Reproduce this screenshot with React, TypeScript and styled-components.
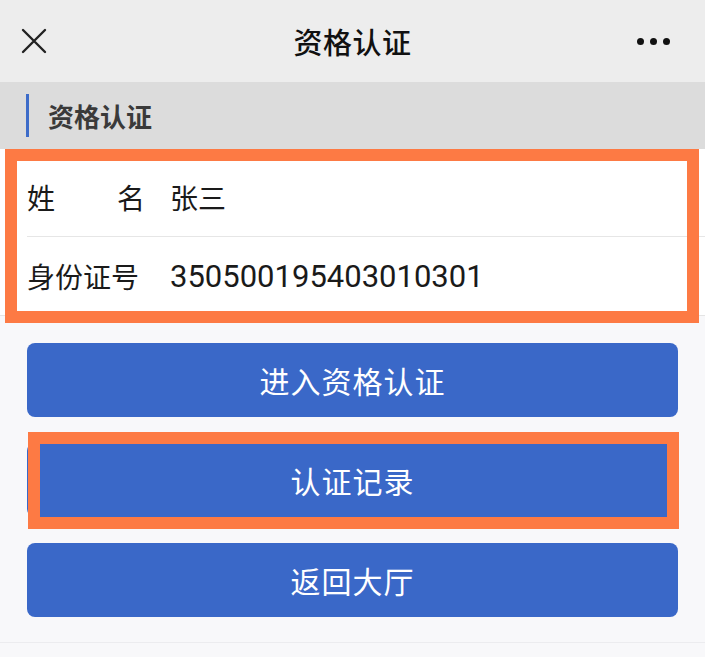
import React from 'react';
import styled, { createGlobalStyle } from 'styled-components';

const ORANGE = '#fd7a44';
const BLUE = '#3a68c8';

const GlobalStyle = createGlobalStyle`
  html, body {
    margin: 0;
    padding: 0;
    background: #f8f8fa;
    font-family: "Noto Sans CJK SC", "Noto Sans", sans-serif;
    color: #1a1a1a;
  }
`;

const Page = styled.div`
  width: 705px;
  min-height: 657px;
  background: #f8f8fa;
`;

const NavBar = styled.div`
  height: 82px;
  background: #ededed;
  display: grid;
  grid-template-columns: 80px 1fr 80px;
  align-items: center;
`;

const NavButton = styled.div<{ $align: 'start' | 'end' }>`
  display: flex;
  justify-content: ${({ $align }) => ($align === 'start' ? 'flex-start' : 'flex-end')};
  padding: ${({ $align }) => ($align === 'start' ? '0 0 0 21px' : '0 35px 0 0')};
  align-items: center;
`;

const NavTitle = styled.div`
  text-align: center;
  font-size: 29px;
  font-weight: 500;
  color: #111;
  letter-spacing: 0.5px;
`;

const Dots = styled.div`
  display: flex;
  gap: 6px;

  span {
    width: 7px;
    height: 7px;
    border-radius: 50%;
    background: #111;
  }
`;

const SectionHeader = styled.div`
  height: 67px;
  background: #dcdcdc;
  display: flex;
  align-items: center;
  padding-left: 26px;
`;

const SectionBar = styled.div`
  width: 3px;
  height: 43px;
  background: #3d6cc9;
  margin-right: 19px;
`;

const SectionTitle = styled.div`
  font-size: 26px;
  font-weight: 700;
  color: #3a3a3a;
`;

const Highlight = styled.div<{ $inset: string }>`
  position: relative;

  &::after {
    content: '';
    position: absolute;
    inset: ${({ $inset }) => $inset};
    border: 12px solid ${ORANGE};
    pointer-events: none;
  }
`;

const Card = styled.div`
  background: #fff;
  padding-top: 9px;
  border-bottom: 1px solid #e4e4e4;
`;

const Row = styled.div<{ $divider?: boolean }>`
  height: 78px;
  display: flex;
  align-items: center;
  margin-left: 27px;
  border-bottom: ${({ $divider }) => ($divider ? '1px solid #e6e6e6' : 'none')};
  font-size: 28px;
`;

const Label = styled.div`
  width: 118px;
  margin-right: 25px;
  display: flex;
  justify-content: space-between;
`;

const Value = styled.div<{ $numeric?: boolean }>`
  font-size: ${({ $numeric }) => ($numeric ? '31px' : '28px')};
  font-family: ${({ $numeric }) =>
    $numeric ? 'Roboto, "Noto Sans CJK SC", sans-serif' : 'inherit'};
`;

const Actions = styled.div`
  padding: 27px 27px 25px;
  display: flex;
  flex-direction: column;
  gap: 26px;
  border-bottom: 1px solid #ececef;
`;

const ActionButton = styled.div`
  height: 74px;
  border-radius: 8px;
  background: ${BLUE};
  color: #fff;
  font-size: 30px;
  display: flex;
  align-items: center;
  justify-content: center;
  letter-spacing: 1px;
`;

const CloseIcon = () => (
  <svg width="26" height="26" viewBox="0 0 26 26">
    <path d="M2 2 L24 24 M24 2 L2 24" stroke="#222" strokeWidth="2.4" strokeLinecap="round" />
  </svg>
);

export default function App() {
  return (
    <Page>
      <GlobalStyle />
      <NavBar>
        <NavButton $align="start">
          <CloseIcon />
        </NavButton>
        <NavTitle>资格认证</NavTitle>
        <NavButton $align="end">
          <Dots>
            <span />
            <span />
            <span />
          </Dots>
        </NavButton>
      </NavBar>
      <SectionHeader>
        <SectionBar />
        <SectionTitle>资格认证</SectionTitle>
      </SectionHeader>
      <Highlight $inset="0 6px -7px 5px">
        <Card>
          <Row $divider>
            <Label>
              <span>姓</span>
              <span>名</span>
            </Label>
            <Value>张三</Value>
          </Row>
          <Row>
            <Label>身份证号</Label>
            <Value $numeric>350500195403010301</Value>
          </Row>
        </Card>
      </Highlight>
      <Actions>
        <ActionButton>进入资格认证</ActionButton>
        <Highlight $inset="-11px -1px -12px 1px">
          <ActionButton>认证记录</ActionButton>
        </Highlight>
        <ActionButton>返回大厅</ActionButton>
      </Actions>
    </Page>
  );
}
